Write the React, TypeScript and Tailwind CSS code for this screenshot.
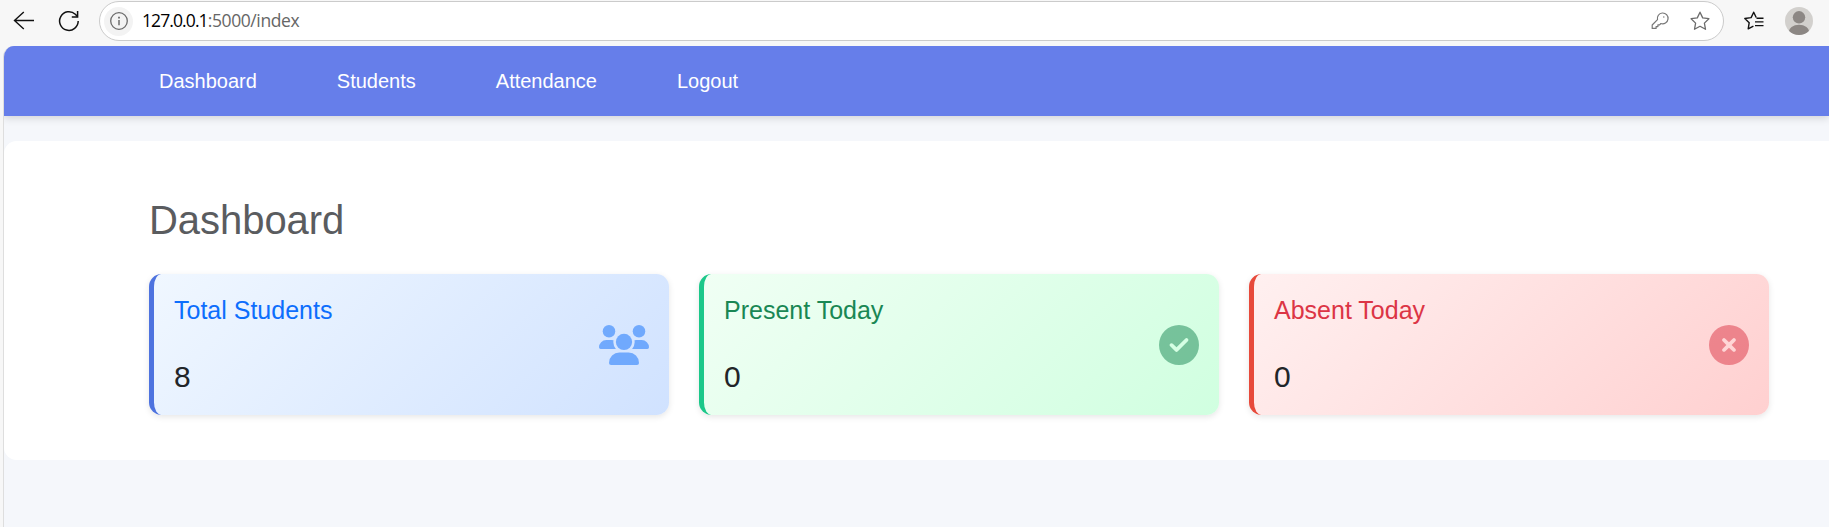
import type { ReactNode } from "react";
import { FaCircleCheck, FaCircleXmark } from "react-icons/fa6";

const STAR = "M10 1.2l2.7 5.7 6.2.8-4.5 4.4 1.1 6.2-5.5-3-5.5 3 1.1-6.2L1.1 7.7l6.2-.8z";

function Toolbar() {
  return (
    <div className="flex h-[45px] items-start bg-[#f7f7f7]">
      <svg className="ml-[13px] mt-[10px] shrink-0" width="22" height="22" viewBox="0 0 22 22" fill="none" stroke="#111" strokeWidth="1.4">
        <path d="M21 10.5H1.5M10.8 2L1.5 10.5l9.3 8.5" />
      </svg>
      <svg className="ml-[23px] mt-[10px] shrink-0" width="22" height="22" viewBox="0 0 22 22" fill="none" stroke="#111" strokeWidth="1.5">
        <path d="M20.2 11a9.3 9.3 0 1 1-2.9-6.7l2.1 2.1" />
        <path d="M19.6 1v5.9h-5.8" />
      </svg>
      <div className="ml-[19px] mt-px flex h-10 w-[1625px] shrink-0 items-center rounded-full border border-[#cbcbcb] bg-white">
        <span className="ml-1 flex size-[29px] items-center justify-center rounded-full bg-[#f3f3f3]">
          <svg width="20" height="20" viewBox="0 0 20 20" fill="none" stroke="#6b6b6b">
            <circle cx="10" cy="10" r="8.3" strokeWidth="1.3" />
            <path d="M10 9v5.2" strokeWidth="1.5" />
            <path d="M10 5.8v1.8" strokeWidth="1.8" />
          </svg>
        </span>
        <span className="ml-[9px] pb-px font-['Open_Sans',sans-serif] text-[17.5px] leading-none tracking-[-0.4px] text-[#666]">
          <span className="tracking-[-0.9px] text-black">127.0.0.1</span>:5000/index
        </span>
        <svg className="ml-auto" width="18" height="18" viewBox="0 0 18 18" fill="none" stroke="#777" strokeWidth="1.2" strokeLinejoin="round">
          <path d="M11.3 1a5.4 5.4 0 1 1-1.4 10.5L8.6 12.8H6.9v1.8H5.1v1.8H1.2v-3.4l5.3-5.3A5.4 5.4 0 0 1 11.3 1z" />
          <circle cx="12.8" cy="5" r="0.7" fill="#777" stroke="none" />
        </svg>
        <svg className="ml-[21px] mr-[13px]" width="20" height="20" viewBox="0 0 20 20" fill="none" stroke="#6b6b6b" strokeWidth="1.3" strokeLinejoin="round">
          <path d={STAR} />
        </svg>
      </div>
      <svg className="ml-[19px] mt-[11px] shrink-0" width="22" height="20" viewBox="0 0 22 20" fill="none" stroke="#111" strokeWidth="1.4" strokeLinejoin="round">
        <path d="M13.2 6.5L10.7 1.2 8.1 6.6l-6.3.9 4.4 4.2-1 6.1 5.2-2.7M13.5 7.3h7M12 10.9h8.5M12 14.6h8.5" />
      </svg>
      <svg className="ml-[20px] mt-[7px] shrink-0" width="28" height="28" viewBox="0 0 28 28">
        <clipPath id="avatar"><circle cx="14" cy="14" r="14" /></clipPath>
        <g clipPath="url(#avatar)">
          <rect width="28" height="28" fill="#d2d0cd" />
          <circle cx="14" cy="10.3" r="6.2" fill="#8c8784" />
          <ellipse cx="14" cy="25.5" rx="10.5" ry="7.7" fill="#8c8784" />
        </g>
      </svg>
    </div>
  );
}

function UsersIcon() {
  return (
    <svg className="h-10 w-[50px] text-[#0d6efd] opacity-50" viewBox="0 0 50 40" fill="currentColor">
      <circle cx="10" cy="6.25" r="6.25" />
      <circle cx="40" cy="6.25" r="6.25" />
      <circle cx="25" cy="16.9" r="8.1" />
      <path d="M7.3 15h5.4q1 0 1.8.3A10.7 10.7 0 0 0 16.9 24H1.7A1.7 1.7 0 0 1 0 22.3 7.3 7.3 0 0 1 7.3 15z" />
      <path d="M42.7 15h-5.4q-1 0-1.8.3A10.7 10.7 0 0 1 33.1 24h15.2a1.7 1.7 0 0 0 1.7-1.7 7.3 7.3 0 0 0-7.3-7.3z" />
      <path d="M20.4 27.5h9.2A10.4 10.4 0 0 1 40 37.9 2.1 2.1 0 0 1 37.9 40H12.1A2.1 2.1 0 0 1 10 37.9 10.4 10.4 0 0 1 20.4 27.5z" />
    </svg>
  );
}

function StatCard({ title, value, icon, tone, titleTone }: { title: string; value: number; icon: ReactNode; tone: string; titleTone: string }) {
  return (
    <div className={`flex h-[141px] w-[520px] items-center justify-between rounded-[12.5px] border-l-[5px] px-5 shadow-[0_2px_6px_rgba(0,0,0,0.1)] ${tone}`}>
      <div>
        <h2 className={`text-[25px] leading-[30px] ${titleTone}`}>{title}</h2>
        <p className="mt-[34px] text-[30px] leading-9 text-[#212529]">{value}</p>
      </div>
      {icon}
    </div>
  );
}

export default function App() {
  return (
    <div className="h-[527px] w-[1829px] overflow-hidden bg-[#f7f7f7] font-['Liberation_Sans',Arial,sans-serif]">
      <Toolbar />
      <div className="ml-[3px] mt-px h-[481px] overflow-hidden rounded-tl-[11px] border-l border-[#dedede] bg-[#f5f7fb]">
        <nav className="flex h-[70px] items-center gap-20 bg-[#667eea] pl-[155px] text-xl leading-[30px] text-white shadow-[0_2px_8px_rgba(0,0,0,0.15)]">
          <a>Dashboard</a>
          <a>Students</a>
          <a>Attendance</a>
          <a>Logout</a>
        </nav>
        <main className="mt-[25px] h-[319px] rounded-l-[12.5px] bg-white pl-[145px] pt-[55px]">
          <h1 className="text-[40px] leading-[48px] tracking-[-0.05px] text-[#5a5c5f]">Dashboard</h1>
          <div className="mt-[30px] flex gap-[30px]">
            <StatCard
              title="Total Students"
              value={8}
              tone="border-[#4e73df] bg-linear-[135deg,#f0f7ff,#d0e2ff]"
              titleTone="text-[#0d6efd]"
              icon={<UsersIcon />}
            />
            <StatCard
              title="Present Today"
              value={0}
              tone="border-[#1cc88a] bg-linear-[135deg,#f0fff4,#d0ffe0]"
              titleTone="text-[#198754]"
              icon={<FaCircleCheck className="size-10 text-[#198754] opacity-50" />}
            />
            <StatCard
              title="Absent Today"
              value={0}
              tone="border-[#e74a3b] bg-linear-[135deg,#fff0f0,#ffd0d0]"
              titleTone="text-[#dc3545]"
              icon={<FaCircleXmark className="size-10 text-[#dc3545] opacity-50" />}
            />
          </div>
        </main>
      </div>
    </div>
  );
}
